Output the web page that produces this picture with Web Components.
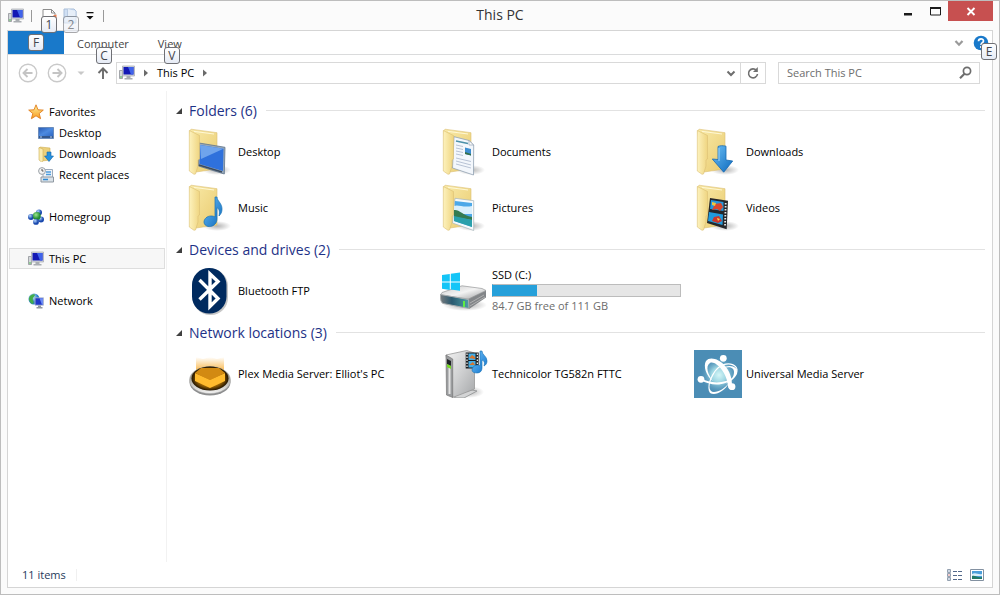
<!DOCTYPE html>
<html lang="en">
<head>
<meta charset="utf-8">
<title>This PC</title>
<style>
html,body{margin:0}
body{font:11px/16px "Open Sans","Noto Sans",sans-serif;color:#000;background:#fbfbfb}
</style>
</head>
<body>
<explorer-window></explorer-window>
<script>
const PC = `<path d="M.5 5.500h3v8h-3z" fill="#d4d7da" stroke="#8f9398" stroke-width=".8"/><path d="M1.500 11h1v2h-1z" fill="#4fc04f"/>
<path d="M3.500 1h12v10h-12z" fill="#d5d9de" stroke="#a3a8af" stroke-width=".7"/><path d="M4.500 2h10v7.500h-10z" fill="#1318b4"/><path d="M9 2h5.500v7.500H12z" fill="#4064ea"/>
<path d="M7.500 11h4v2h2v1.500h-8V13h2z" fill="#a9adb2"/>`;
const FOLDER_DEFS = `<defs><linearGradient id="fb" x1="0" x2="1" y2="1"><stop stop-color="#f9eaa8"/><stop offset="1" stop-color="#e9cb70"/></linearGradient>
<linearGradient id="ff" x1="0" x2="1"><stop stop-color="#fdf2bd"/><stop offset="1" stop-color="#efd581"/></linearGradient>
<linearGradient id="bl" x1="0" x2="1" y2="1"><stop stop-color="#6cc0f6"/><stop offset="1" stop-color="#0d69bd"/></linearGradient>
<radialGradient id="sh"><stop stop-color="#000" stop-opacity=".3"/><stop offset="1" stop-color="#000" stop-opacity="0"/></radialGradient></defs>`;
const folder = inner => `${FOLDER_DEFS}<ellipse cx="31" cy="42" rx="14" ry="5" fill="url(#sh)"/>
<path d="M3.500 3 5 1.200 31 4.700V41L10 44z" fill="url(#fb)" stroke="#dcc074" stroke-width=".6"/>
<path d="M8 3.400 28 6" stroke="#fff8d6" stroke-width="1"/>
${inner}
<path d="M3.300 2.500 13.500 7.500 V31L12 32v6L9.500 46 8 46.300 3.300 43z" fill="url(#ff)" stroke="#dcc074" stroke-width=".6"/>`;
const NOTE = `<path d="M29 13h2c0 4 5 6 5 12 0 3-1 5-3 7 1-5 0-7-2-8.500V35c0 4-3 7-6.500 7.500S18 41 18 38s3-6 7-6c2 0 3 .4 4 1z" fill="url(#bl)" stroke="#1771b5" stroke-width=".7"/>`;
const ICONS = {
pc:[16,PC],
star:[16,`<defs><linearGradient id="g" x2="0" y2="1"><stop stop-color="#fff2a0"/><stop offset="1" stop-color="#f79a1c"/></linearGradient></defs><path d="M8 .8l2 5 5.300.3-4.100 3.400 1.400 5.200L8 11.800l-4.600 2.900 1.400-5.200L.7 6.100 6 5.800z" fill="url(#g)" stroke="#e07d1e" stroke-width=".9"/>`],
desktop:[16,`<defs><linearGradient id="g" x2="1" y2="1"><stop stop-color="#2b5cb5"/><stop offset=".5" stop-color="#4d8be0"/><stop offset="1" stop-color="#2f68c4"/></linearGradient></defs><path d="M.5 2.500h15v11H.5z" fill="#35588c" stroke="#6b8cbb"/><path d="M1 3h14v8H1z" fill="url(#g)"/><path d="M2 12h2M12 12h2" stroke="#b6cff0"/>`],
dlsmall:[16,`<path d="M1 2 2 1l10 1v12l-8 1z" fill="#ecd07b" stroke="#cfae54" stroke-width=".6"/><path d="M1 1.500 5 3v12l-1.500 1L1 14z" fill="#f9ebb0" stroke="#cfae54" stroke-width=".6"/><path d="M9 6h4v4h2.500L11 15.500 6.500 10H9z" fill="#2591df" stroke="#1564aa" stroke-width=".6"/>`],
recent:[16,`<path d="M5 2.500h9.500v9H5z" fill="#eef3f9" stroke="#9caabb"/><path d="M8 5h5M8 7.500h5" stroke="#4e9cdb" stroke-width="1.400"/><path d="M3 10h12.500v5H3z" fill="#dae1e7" stroke="#8f98a1"/><path d="M5 12.500h5" stroke="#2d8bd5" stroke-width="1.500"/><circle cx="4" cy="4" r="3.400" fill="#f4f4f4" stroke="#9aa1a7"/><path d="M4 2v2h1.500" fill="none" stroke="#555"/>`],
home:[16,`<defs><radialGradient id="b" cx=".35" cy=".3"><stop stop-color="#b5d8ff"/><stop offset="1" stop-color="#1948ad"/></radialGradient><radialGradient id="g" cx=".4" cy=".35"><stop stop-color="#9be88d"/><stop offset="1" stop-color="#238a33"/></radialGradient></defs><circle cx="11" cy="3.500" r="3" fill="url(#b)"/><circle cx="3" cy="8" r="3" fill="url(#b)"/><circle cx="13" cy="10.500" r="3" fill="url(#b)"/><circle cx="8.800" cy="7" r="4" fill="url(#g)"/><circle cx="8" cy="12.900" r="2.900" fill="url(#b)"/>`],
network:[16,`<defs><radialGradient id="g" cx=".35" cy=".3"><stop stop-color="#d5f3ff"/><stop offset="1" stop-color="#2378c7"/></radialGradient></defs><circle cx="6" cy="6" r="5.500" fill="url(#g)"/><path d="M2 3c2-2 5-2 5-1S4 5 5 7s1 4-1 4C1 8 0 6 2 3z" fill="#43ad4b"/><path d="M7 4.800h8.500v7.400H7z" fill="#2037ca" stroke="#b9c0cb" stroke-width=".8"/><path d="M11.500 5.200H15v6.500h-1z" fill="#6d8cf4"/><path d="M10 12.500h3V14h1.500v1.500h-6V14H10z" fill="#9298a0"/>`],
props:[16,`<path d="M2 1.500h8.500l3.500 3.500v11H2z" fill="#fff" stroke="#8d8d8d"/><path d="M10.500 1.500V5H14" fill="none" stroke="#8d8d8d"/><path d="M12 7.500l3.500-1v4z" fill="#ef7d4b"/>`],
newf:[16,`<path d="M1 1h10l2 2v12H1z" fill="#cfdff3" stroke="#a9bed9"/><path d="M4.500 1v7.500H13V3" fill="#e6eef8" stroke="#b9cbe2"/>`],
deskf:[48,folder(`<path d="M13 15 39 19.300 38.300 46 12.500 38z" fill="#98a9ba" stroke="#60748a" stroke-width=".8"/><path d="M14 17 37.500 20.800 37 43 13.500 36z" fill="#2f71dc"/><path d="M14 17 37.500 20.800 15 31z" fill="#6fa4ec"/><path d="M13 37 36 44" stroke="#3a4b60" stroke-width="1.500"/>`)],
docf:[48,folder(`<path d="M14 8.700 29 12.500 33.700 17 33.500 47 12.500 40z" fill="#f3f7fc" stroke="#92a2b3" stroke-width=".8"/><path d="M29 12.500V17h4.500z" fill="#fff" stroke="#92a2b3" stroke-width=".7"/><path d="M16 13 28 15.500" stroke="#4b90a9" stroke-width="1.500"/><path d="M16 17 23 18.500M16 20 23 21.500M16 23 23 24.500M16 26 23 27.500M16 30 31 33.500M16 33 31 37M16 36 31 40" stroke="#a8b5ca" stroke-width=".8"/><path d="M25 19.500 31 21v6.500L25 26z" fill="#3d8ed1"/><path d="M25 24 31 26v1.500L25 26z" fill="#356f48"/>`)],
dlf:[48,folder('')+`<path d="M24 18.500c2-1 5-1 8-.3V32l6.700 1-9 11.200L18.300 31l5.700.5z" fill="url(#bl)" stroke="#1669b2" stroke-width=".8"/><path d="M25 20v13" stroke="#a0d7fa"/>`],
musf:[48,folder('')+NOTE],
picf:[48,folder(`<path d="M15 14.300 33.700 16.700V46.500L12.500 39z" fill="#f5fafc" stroke="#a5b3b9" stroke-width=".7"/><path d="M15 17 32 19V43L14 37z" fill="#4ca8e8"/><path d="M14 22c4-2 9 2 18 0v8H14z" fill="#d9effc"/><path d="M14 26c5-1 8 5 18 7v3l-18-3z" fill="#347b50"/><path d="M14 32 32 36v7L14 37z" fill="#2aa0ab"/>`)],
vidf:[48,folder(`<path d="M16 14 34 16.700 32.700 45.300 13 39z" fill="#26272a"/><path d="M17 16 29.500 18V27L16 25z" fill="#2796dc"/><path d="M15 28 29 30.500 28.500 41 14 37z" fill="#219bdd"/><path d="M21 20l6-1 2 4-3 4-3-2-5 1z" fill="#d9472d"/><path d="M18 18l4 1-1 3-3-1z" fill="#f2c73c"/><path d="M20 33l5-1 3 5-4 2-6-2z" fill="#cc372b"/><path d="M23 34l3 1-2 2z" fill="#ffd456"/><path d="M31.700 19 31 43" stroke="#e6eaec" stroke-width="1.800" stroke-dasharray="1.500 1.500"/>`)],
bt:[48,`<rect x="7" y="2" width="35" height="46" rx="17" fill="#000" opacity=".22"/><rect x="6" y="1" width="34.500" height="45.500" rx="17" fill="#002a5f"/><path d="M13.500 13 32 31.500 24 39.500V7l8 7.500L13.500 32.500" fill="none" stroke="#fff" stroke-width="3.400"/>`],
ssd:[48,`<defs><linearGradient id="t" x2="1" y2="1"><stop stop-color="#c7c9ca"/><stop offset=".5" stop-color="#f3f3f3"/><stop offset="1" stop-color="#9c9ea0"/></linearGradient><linearGradient id="f" x2="1"><stop stop-color="#777b7e"/><stop offset=".4" stop-color="#2a5a70"/><stop offset="1" stop-color="#4e9fa7"/></linearGradient><radialGradient id="s"><stop stop-opacity=".35"/><stop offset="1" stop-opacity="0"/></radialGradient></defs><ellipse cx="25" cy="38" rx="22" ry="6" fill="url(#s)"/><path d="M28 31 46 23.500V30.500L29 42z" fill="#828588"/><path d="M30 36 44 28M30 39 45 30" stroke="#bbb" stroke-width=".8"/><path d="M.5 28 2 25.500 22 18.800 42 21.500 46 23.500 28.500 32z" fill="url(#t)" stroke="#969899" stroke-width=".7"/><path d="M.5 27.500 28.500 32.500 29 41.500 3 36.500Q0 35 .5 27.500z" fill="url(#f)" stroke="#a9adaf"/><path d="M24 34v6" stroke="#60ed42" stroke-width="2"/><path d="M2 8 9.800 7v7.500H2zM10.800 6.800 20 5.500v9h-9.200zM2 15.500h7.800V23L2 21.800zM10.800 15.500H20v8.300l-9.200-1.200z" fill="#14c5f7"/>`],
plex:[48,`<defs><linearGradient id="u" x2="0" y2="1"><stop stop-color="#f9b13b" stop-opacity="0"/><stop offset=".6" stop-color="#f9b13b" stop-opacity=".9"/><stop offset="1" stop-color="#f9b13b" stop-opacity=".3"/></linearGradient><linearGradient id="r" x2="0" y2="1"><stop stop-color="#6a6450"/><stop offset="1" stop-color="#f5f5f5"/></linearGradient><radialGradient id="d"><stop stop-color="#e09a18"/><stop offset=".6" stop-color="#b87806"/><stop offset="1" stop-color="#201300"/></radialGradient></defs><path d="M10 7 17 9 24 7 31 9 38 7V20L24 30 10 20z" fill="url(#u)"/><ellipse cx="24" cy="32" rx="20.500" ry="13.500" fill="#8d8e8f"/><ellipse cx="24" cy="30" rx="20.500" ry="13.500" fill="url(#r)" stroke="#aaa" stroke-width=".5"/><ellipse cx="24" cy="28.500" rx="18.500" ry="12" fill="url(#d)"/><path d="M9 23 24 30 39 23V31L24 38 9 31z" fill="#ffbb2e"/><path d="M9 23 15 18H33L39 23 24 30z" fill="#d28a12"/>`],
tech:[48,`<defs><linearGradient id="a" x2="1" y2="1"><stop stop-color="#f2f2f2"/><stop offset=".5" stop-color="#cfd0d1"/><stop offset="1" stop-color="#a5a7a9"/></linearGradient><linearGradient id="bl" x2="1" y2="1"><stop stop-color="#76c5fa"/><stop offset="1" stop-color="#0d70ca"/></linearGradient><radialGradient id="s"><stop stop-opacity=".3"/><stop offset="1" stop-opacity="0"/></radialGradient></defs><ellipse cx="29" cy="42" rx="15" ry="6" fill="url(#s)"/><path d="M14 47 20 43 32 40 37 41 24 48 16 48z" fill="#d3d4d5" stroke="#8d8f90" stroke-width=".8"/><path d="M6 5 26.700.5 34.500 3V39L12.700 47.500z" fill="url(#a)" stroke="#989898" stroke-width=".8"/><path d="M6 5 12.700 9V47.500L6.500 45z" fill="#9a9c9e" stroke="#777" stroke-width=".7"/><path d="M9.500 18v26" stroke="#e4e4e4" stroke-width="2"/><path d="M7 9l4 2v5l-4-2z" fill="#202427"/><path d="M7 14l4 2v3l-4-2z" fill="#78db26"/><path d="M25.700 2.500h13v16h-13z" fill="#1b1e20"/><path d="M28.500 3.500h7v6.500h-7zM28.500 11h7v6.500h-7z" fill="#45aee6"/><path d="M29 8l3-3 3 2v2zM29 15l4-3 2 3z" fill="#d9752d"/><path d="M27 3.500V18M37.300 3.500V18" stroke="#fff" stroke-width="1.200" stroke-dasharray="1.500 1.500"/><path d="M40 1h2c0 4 5 5 5 10 0 2-1 4-3 5 1-4 0-5-2-6v8c0 3-2 5-5 5s-5-1-5-3 2-5 5-5c2 0 2 .4 3 .8z" fill="url(#bl)" stroke="#1670b4" stroke-width=".6"/>`],
ums:[48,`<defs><radialGradient id="w"><stop stop-color="#d4f6f7"/><stop offset=".4" stop-color="#9cd5e2"/><stop offset="1" stop-color="#4b8db5" stop-opacity="0"/></radialGradient></defs><path d="M0 0h48v48H0z" fill="#4b8db5"/><circle cx="25" cy="25" r="19" fill="url(#w)"/><g fill="#fff" fill-rule="evenodd"><path d="M12 11C18 3 39 15 38 36 38 41 34 39 34 36 33 22 21 10 16 13S14 25 19 31C12 26 9 16 12 11z"/><path d="M43 24C45 13 28 10 20 24 14 34 14 42 20 42 25 42 31 38 35 33 30 42 21 46 16 43 12 38 16 25 23 18 33 9 47 14 43 24 40 30 35 32 31 34 37 30 40 27 40 22 40 16 32 16 26 20 34 13 45 16 43 24z"/><path d="M7 28C16 34 31 34 40 27 32 37 16 36 7 30z"/><circle cx="29.300" cy="8.300" r="3.400"/><circle cx="7" cy="29.300" r="3.400"/><circle cx="38" cy="36.700" r="3.400"/></g>`],
details:[16,`<path d="M.5 2.500h3v3h-3zM.5 6.500h3v3h-3zM.5 10.500h3v3h-3z" fill="#fff" stroke="#94a1b0"/><path d="M2 3.500v1M2 11.500v1" stroke="#3d5f95"/><path d="M2 7.500v1" stroke="#c33"/><path d="M6 4.500h4M11 4.500h4M6 8.500h4M11 8.500h4M6 12.500h4M11 12.500h4" stroke="#52688a"/>`],
large:[16,`<path d="M1.500 2.500h13v11h-13z" fill="#fff" stroke="#8391a1"/><path d="M3 4h10v8H3z" fill="#4b9ed9"/><path d="M3 7c4-2 6 1 10 0v2H3z" fill="#d8eefa"/><path d="M3 9c3-1 6 2 10 1v2H3z" fill="#217966"/>`],
back:[20,`<circle cx="10" cy="10" r="8.700" fill="none" stroke="#c9c9c9" stroke-width="1.400"/><path d="M14.500 10H6M9.500 6 5.500 10l4 4" fill="none" stroke="#c4c4c4" stroke-width="1.900"/>`],
fwd:[20,`<circle cx="10" cy="10" r="8.700" fill="none" stroke="#c9c9c9" stroke-width="1.400"/><path d="M5.500 10H14M10.500 6l4 4-4 4" fill="none" stroke="#c4c4c4" stroke-width="1.900"/>`],
up:[16,`<path d="M8 14V3.500M3.500 8 8 3.300 12.500 8" fill="none" stroke="#6c6c6c" stroke-width="1.900"/>`],
down:[8,`<path d="M.5 2.500h7L4 6z" fill="#c8c8c8"/>`],
crumb:[8,`<path d="M2 .5 6 4 2 7.500z" fill="#6a6a6a"/>`],
qat:[8,`<path d="M.5 4h7L4 7.500z" fill="#111"/><path d="M.5 0h7v1.300h-7z" fill="#111"/>`],
chev:[12,`<path d="M2.500 4.500 6 8l3.500-3.500" fill="none" stroke="#6e6e6e" stroke-width="2"/>`],
ribchev:[12,`<path d="M2.500 4 6 7.700 9.500 4" fill="none" stroke="#9a9a9a" stroke-width="2.200"/>`],
refresh:[16,`<path d="M11.500 5.500A4.500 4.500 0 1 0 12.500 9" fill="none" stroke="#707070" stroke-width="1.600"/><path d="M12.800 2v5H8z" fill="#707070"/>`],
find:[16,`<circle cx="9" cy="6" r="3.600" fill="none" stroke="#6d6d6d" stroke-width="1.700"/><path d="M6.500 8.700 2 13.200" stroke="#6d6d6d" stroke-width="2.200"/>`],
help:[16,`<circle cx="8" cy="8" r="7.300" fill="#1979ca"/><path d="M5.500 6.200C5.600 3.200 10.500 3.200 10.500 6 10.500 7.800 8 7.800 8 10M8 11v2" fill="none" stroke="#fff" stroke-width="1.700"/>`],
min:[16,`<path d="M4 10h8v2.500H4z" fill="#1b1b1b"/>`],
max:[16,`<path d="M3.500 5h10v7h-10z" fill="none" stroke="#1b1b1b"/><path d="M3 4h11v2H3z" fill="#1b1b1b"/>`],
close:[16,`<path d="M4.500 5 11.500 12M11.500 5 4.500 12" stroke="#fff" stroke-width="1.900"/>`]
};
const define = (name, css, html, ready) => {
  const t = document.createElement('template');
  t.innerHTML = `<style>*{box-sizing:border-box}button{font:inherit;color:inherit;border:0;padding:0;margin:0;background:none}a{color:inherit;text-decoration:none}${css}</style>${html}`;
  customElements.define(name, class extends HTMLElement {
    constructor(){ super(); this.attachShadow({mode:'open'}).append(t.content.cloneNode(true)); }
    connectedCallback(){ ready && ready(this, this.shadowRoot); }
  });
};

define('shell-icon', ':host{display:block;flex:none}svg{display:block}', '<svg aria-hidden="true"></svg>', (el, root) => {
  const [size, art] = ICONS[el.getAttribute('name')];
  const svg = root.querySelector('svg');
  svg.setAttribute('viewBox', `0 0 ${size} ${size}`);
  svg.setAttribute('width', size); svg.setAttribute('height', size);
  svg.innerHTML = art;
});

define('key-tip', `:host{position:absolute;z-index:2;width:16px;height:17px;box-sizing:border-box;border:1px solid #6f7075;border-radius:3px;background:linear-gradient(#fff,#e6ebf5);color:#43464d;font-size:12px;line-height:15px;text-align:center}
:host([faded]){opacity:.6}`, '<slot></slot>');

define('title-bar', `:host{display:grid;grid-template-columns:1fr auto 1fr;height:29px;color:#333}
.quick{display:flex;align-items:center;gap:7px;padding-left:7px}
.quick i{width:1px;height:12px;background:#999}
.quick i:first-of-type{margin-right:2px}
.quick i:last-of-type{margin-left:2px}
.cell{position:relative;display:block;width:16px}
.quick .cell+.cell{margin-left:-1px}
.cell key-tip{left:0;top:8px}
h1{margin:0;font-size:14px;line-height:28px;font-weight:400}
.controls{display:flex;justify-content:flex-end;padding-right:6px}
.controls button{display:flex;align-items:center;justify-content:center;width:27px;height:20px}
.controls .close{width:45px;background:#c75050}`,
`<div class="quick"><shell-icon name="pc"></shell-icon><i></i>
<button class="cell" aria-label="Properties"><shell-icon name="props"></shell-icon><key-tip>1</key-tip></button>
<button class="cell" aria-label="New folder"><shell-icon name="newf"></shell-icon><key-tip faded>2</key-tip></button>
<button aria-label="Customize Quick Access Toolbar"><shell-icon name="qat"></shell-icon></button><i></i></div>
<h1>This PC</h1>
<div class="controls"><button aria-label="Minimize"><shell-icon name="min"></shell-icon></button><button aria-label="Maximize"><shell-icon name="max"></shell-icon></button><button class="close" aria-label="Close"><shell-icon name="close"></shell-icon></button></div>`);

define('ribbon-tabs', `:host{display:flex;height:24px;border-bottom:1px solid #dadbdc;color:#444}
button{position:relative}
.file{width:56px;height:23px;background:#1979ca;color:#fff}
.file key-tip{left:20px;top:3px}
.tab{padding:3px 13px 0}.tab+.tab{padding:3px 16px 0}
.tab key-tip{top:16px;left:32px}.tab+.tab key-tip{left:22px}
.end{display:flex;align-items:center;gap:8px;margin-left:auto;padding-right:3px}
.end key-tip{left:8px;top:8px}`,
`<button class="file" aria-label="File"><key-tip>F</key-tip></button><button class="tab">Computer<key-tip>C</key-tip></button><button class="tab">View<key-tip>V</key-tip></button>
<div class="end"><button aria-label="Expand the Ribbon"><shell-icon name="ribchev"></shell-icon></button><button aria-label="Help"><shell-icon name="help"></shell-icon><key-tip>E</key-tip></button></div>`);

define('address-bar', `:host{display:flex;align-items:center;height:36px;padding:0 12px 0 10px}
.nav{display:flex;align-items:center;gap:9px}
.nav .recent{margin-left:1px}.nav .up{margin:0 5px 0 1px}
.path{display:flex;align-items:center;flex:1;height:22px;border:1px solid #d9d9d9;padding-left:2px}
.crumbs{display:flex;align-items:center;gap:7px;flex:1}
.path .drop{width:18px;display:flex;justify-content:center}
.path .refresh{width:25px;height:20px;border-left:1px solid #d9d9d9;display:flex;align-items:center;justify-content:center}
.search{display:flex;align-items:center;width:202px;height:22px;margin-left:12px;border:1px solid #d9d9d9;padding:0 5px 0 8px}
input{flex:1;min-width:0;border:0;padding:0;background:none;font:inherit;outline:0}
input::placeholder{color:#6d6d6d;opacity:1}`,
`<div class="nav"><button aria-label="Back"><shell-icon name="back"></shell-icon></button><button aria-label="Forward"><shell-icon name="fwd"></shell-icon></button><button class="recent" aria-label="Recent locations"><shell-icon name="down"></shell-icon></button><button class="up" aria-label="Up"><shell-icon name="up"></shell-icon></button></div>
<div class="path"><div class="crumbs"><shell-icon name="pc"></shell-icon><shell-icon name="crumb"></shell-icon><a href="#this-pc">This PC</a><shell-icon name="crumb"></shell-icon></div><button class="drop" aria-label="Previous locations"><shell-icon name="chev"></shell-icon></button><button class="refresh" aria-label="Refresh"><shell-icon name="refresh"></shell-icon></button></div>
<div class="search"><input type="text" placeholder="Search This PC" aria-label="Search This PC"><shell-icon name="find"></shell-icon></div>`);

define('nav-item', `:host{display:block}
a{display:flex;align-items:center;gap:5px;height:21px;padding-left:18px;border:1px solid transparent}
:host([child]) a{padding-left:28px}
:host([current]) a{background:#f7f7f7;border-color:#dedede}`,
'<a href="#"><div class="pic"></div><slot></slot></a>', (el, root) => {
  root.querySelector('.pic').innerHTML = `<shell-icon name="${el.getAttribute('icon')}"></shell-icon>`;
});

define('nav-pane', `:host{display:block;width:159px;padding:10px 1px 0;border-right:1px solid #f2f2f2}
nav{display:flex;flex-direction:column;gap:21px}`,
`<nav aria-label="Navigation"><div><nav-item icon="star">Favorites</nav-item><nav-item child icon="desktop">Desktop</nav-item><nav-item child icon="dlsmall">Downloads</nav-item><nav-item child icon="recent">Recent places</nav-item></div>
<nav-item icon="home">Homegroup</nav-item><nav-item current icon="pc">This PC</nav-item><nav-item icon="network">Network</nav-item></nav>`);

define('item-group', `:host{display:block}
h2{display:flex;align-items:center;gap:9px;height:27px;margin:0;font-size:14px;line-height:20px;font-weight:400;color:#1e3287}
h2::after{content:"";flex:1;height:1px;background:#e2e2e2}
button{display:flex;align-items:center;gap:6px}
svg{display:block}
.tiles{display:grid;grid-template-columns:repeat(auto-fill,254px);padding-left:11px}`,
`<h2><button aria-expanded="true"><svg width="8" height="8" viewBox="0 0 8 8" aria-hidden="true"><path d="M7 1v6H1z" fill="#404040"/></svg><span></span></button></h2><div class="tiles"><slot></slot></div>`,
(el, root) => { root.querySelector('span').textContent = el.getAttribute('heading'); });

define('file-tile', `:host{display:block}
a{display:flex;align-items:center;gap:4px;height:56px}
.text{display:flex;flex-direction:column;gap:1px}`,
'<a href="#"><div class="pic"></div><div class="text"><slot></slot></div></a>', (el, root) => {
  root.querySelector('.pic').innerHTML = `<shell-icon name="${el.getAttribute('icon')}"></shell-icon>`;
});

define('drive-space', `:host{display:flex;flex-direction:column;gap:1px;padding-bottom:1px;color:#6d6d6d}
progress{appearance:none;display:block;width:189px;height:13px;border:1px solid #bcbcbc;border-left-color:#26a0da}
progress::-webkit-progress-bar{background:#e6e6e6}
progress::-webkit-progress-value{background:#26a0da}`,
'<progress max="111" value="26.300" aria-label="Space used"></progress><slot></slot>');

define('status-bar', `:host{display:flex;align-items:center;height:25px;padding:0 7px 0 14px;color:#1e395b}
.count{padding-right:10px;border-right:1px solid #f0f0f0;line-height:12px}
.views{display:flex;gap:6px;margin-left:auto}`,
`<div class="count">11 items</div><div class="views"><button aria-label="Details view"><shell-icon name="details"></shell-icon></button><button aria-label="Large icons view"><shell-icon name="large"></shell-icon></button></div>`);

define('explorer-window', `:host{display:flex;flex-direction:column;min-height:100vh;box-sizing:border-box;border:1px solid #bdbdbd;background:#fbfbfb}
.client{flex:1;display:flex;flex-direction:column;margin:0 6px 6px;border:1px solid #d5d5d5;background:#fff}
.body{flex:1;display:flex}
main{flex:1;min-width:0;padding:6px 7px 0 8px}`,
`<title-bar></title-bar><div class="client"><ribbon-tabs></ribbon-tabs><address-bar></address-bar>
<div class="body"><nav-pane></nav-pane><main>
<item-group heading="Folders (6)"><file-tile icon="deskf">Desktop</file-tile><file-tile icon="docf">Documents</file-tile><file-tile icon="dlf">Downloads</file-tile><file-tile icon="musf">Music</file-tile><file-tile icon="picf">Pictures</file-tile><file-tile icon="vidf">Videos</file-tile></item-group>
<item-group heading="Devices and drives (2)"><file-tile icon="bt">Bluetooth FTP</file-tile><file-tile icon="ssd"><span>SSD (C:)</span><drive-space>84.7 GB free of 111 GB</drive-space></file-tile></item-group>
<item-group heading="Network locations (3)"><file-tile icon="plex">Plex Media Server: Elliot's PC</file-tile><file-tile icon="tech">Technicolor TG582n FTTC</file-tile><file-tile icon="ums">Universal Media Server</file-tile></item-group>
</main></div><status-bar></status-bar></div>`);
</script>
</body>
</html>
